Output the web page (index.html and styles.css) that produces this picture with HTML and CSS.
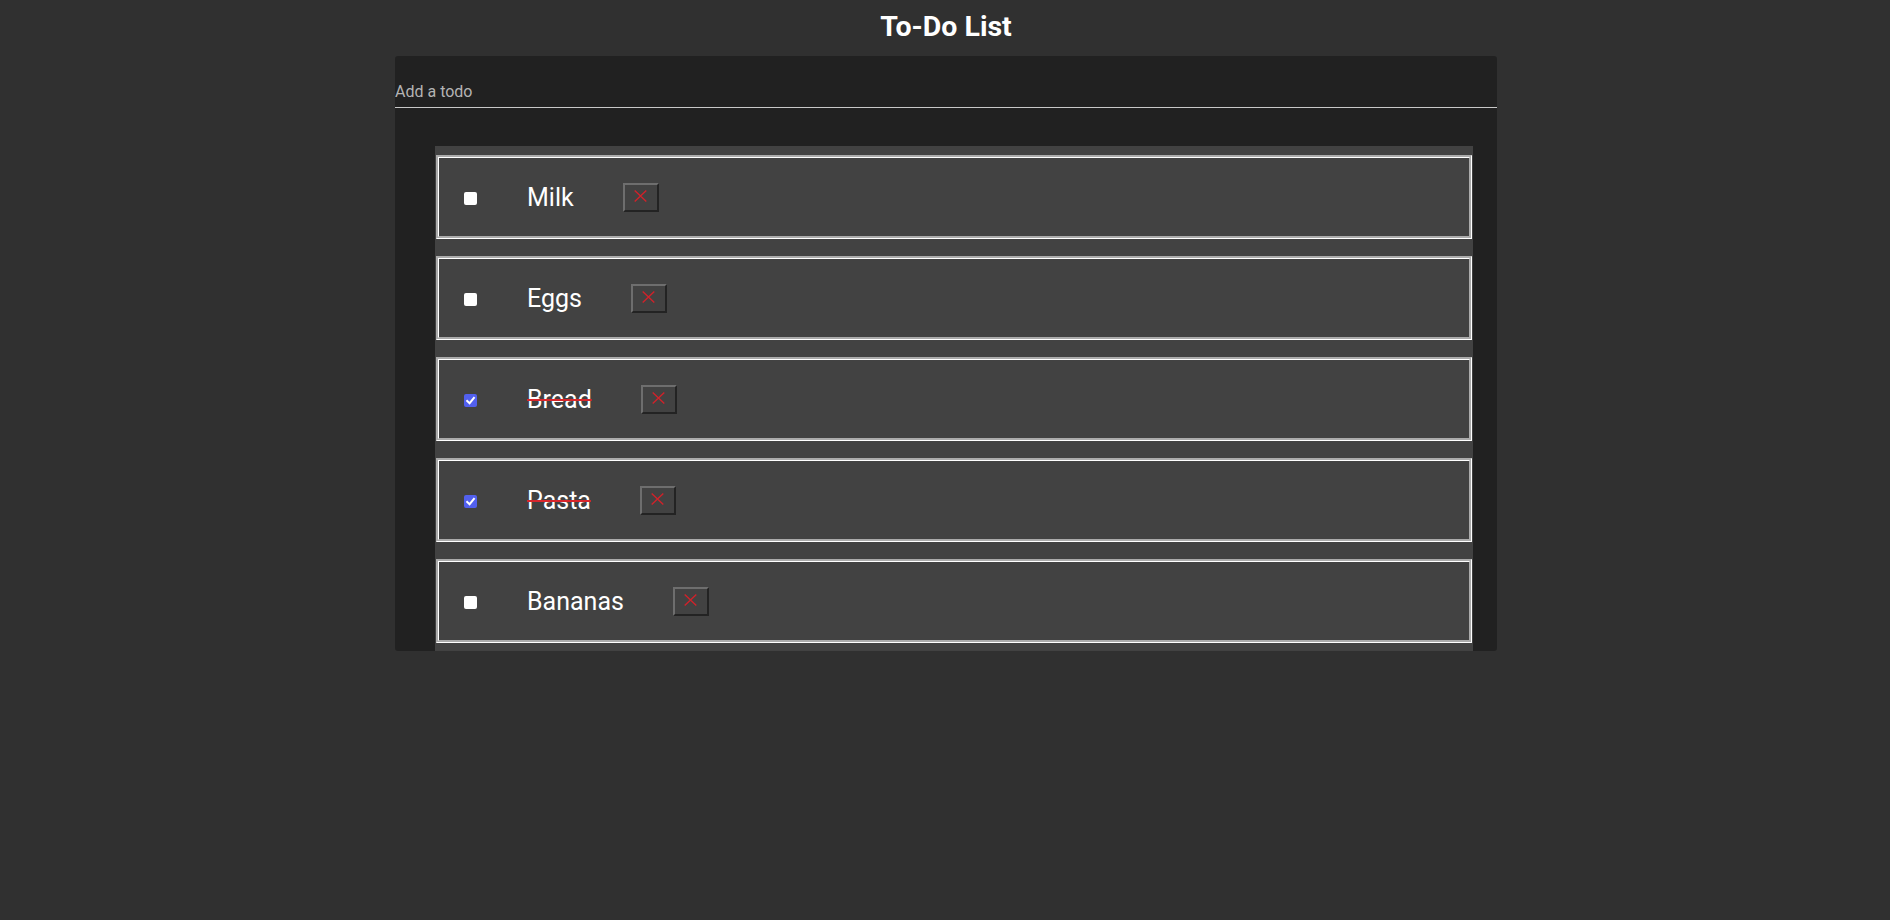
FILE: index.html
```html
<!DOCTYPE html>
<html lang="en">
<head>
<meta charset="utf-8">
<title>To-Do List</title>
<link rel="stylesheet" href="styles.css">
</head>
<body>
<h1 class="title">To-Do List</h1>
<div class="panel">
  <input class="todo-input" type="text" placeholder="Add a todo">
  <ul class="todo-list">
    <li class="todo-item">
      <span class="box"></span>
      <span class="todo-text">Milk</span>
      <button class="delete" type="button" aria-label="Delete"><svg class="x-icon" viewBox="0 0 13 12" width="13" height="12"><path d="M0.7 0.5 L12.3 11.5 M12.3 0.5 L0.7 11.5"/></svg></button>
    </li>
    <li class="todo-item">
      <span class="box"></span>
      <span class="todo-text">Eggs</span>
      <button class="delete" type="button" aria-label="Delete"><svg class="x-icon" viewBox="0 0 13 12" width="13" height="12"><path d="M0.7 0.5 L12.3 11.5 M12.3 0.5 L0.7 11.5"/></svg></button>
    </li>
    <li class="todo-item">
      <span class="box box-checked"><svg viewBox="0 0 13 13" width="13" height="13"><path d="M3.2 6.9 L5.6 9.2 L9.9 4"/></svg></span>
      <span class="todo-text done">Bread</span>
      <button class="delete" type="button" aria-label="Delete"><svg class="x-icon" viewBox="0 0 13 12" width="13" height="12"><path d="M0.7 0.5 L12.3 11.5 M12.3 0.5 L0.7 11.5"/></svg></button>
    </li>
    <li class="todo-item">
      <span class="box box-checked"><svg viewBox="0 0 13 13" width="13" height="13"><path d="M3.2 6.9 L5.6 9.2 L9.9 4"/></svg></span>
      <span class="todo-text done">Pasta</span>
      <button class="delete" type="button" aria-label="Delete"><svg class="x-icon" viewBox="0 0 13 12" width="13" height="12"><path d="M0.7 0.5 L12.3 11.5 M12.3 0.5 L0.7 11.5"/></svg></button>
    </li>
    <li class="todo-item">
      <span class="box"></span>
      <span class="todo-text">Bananas</span>
      <button class="delete" type="button" aria-label="Delete"><svg class="x-icon" viewBox="0 0 13 12" width="13" height="12"><path d="M0.7 0.5 L12.3 11.5 M12.3 0.5 L0.7 11.5"/></svg></button>
    </li>
  </ul>
</div>
</body>
</html>
```

FILE: styles.css
```css
html, body {
  margin: 0;
  padding: 0;
}

body {
  background: #303030;
  font-family: Roboto, "Liberation Sans", sans-serif;
  color: #ffffff;
  padding-left: 2px;
}

.title {
  margin: 11px 0 13px;
  font-size: 28.5px;
  line-height: 32px;
  font-weight: 700;
  text-align: center;
  color: #ffffff;
}

.panel {
  width: 1102px;
  margin: 0 auto;
  background: #212121;
  border-radius: 3px;
  padding-top: 26px;
  display: flex;
  flex-direction: column;
}

.todo-input {
  display: block;
  box-sizing: content-box;
  width: 100%;
  margin: 0;
  padding: 0 0 6px;
  height: 19px;
  line-height: 19px;
  border: none;
  border-bottom: 1px solid #c8c8c8;
  background: transparent;
  outline: none;
  font-family: Roboto, "Liberation Sans", sans-serif;
  font-size: 16px;
  color: #ffffff;
}

.todo-input::placeholder {
  color: #b4b4b4;
  opacity: 1;
}

.todo-list {
  list-style: none;
  margin: 38px 24px 0 40px;
  padding: 9px 1px 8px;
  background: #424242;
  display: flex;
  flex-direction: column;
  gap: 17px;
}

.todo-item {
  box-sizing: border-box;
  height: 84px;
  border: 3px groove #ffffff;
  background: #424242;
  padding-left: 25px;
  display: flex;
  align-items: center;
}

.box {
  box-sizing: border-box;
  width: 13px;
  height: 13px;
  margin-top: 3px;
  border-radius: 2px;
  background: #ffffff;
  flex: none;
  display: flex;
}

.box-checked {
  background: #5260ee;
}

.box-checked svg path {
  fill: none;
  stroke: #ffffff;
  stroke-width: 2;
  stroke-linecap: square;
}

.todo-text {
  margin: 0 49px 0 50px;
  font-size: 25px;
  line-height: normal;
  color: #ffffff;
}

.done {
  text-decoration: line-through;
  text-decoration-color: #d8262c;
  text-decoration-thickness: 2px;
}

.delete {
  box-sizing: border-box;
  width: 36px;
  height: 29px;
  padding: 0 0 2px;
  margin: 0;
  background: #424242;
  border-style: solid;
  border-width: 2px;
  border-color: #6e6e6e #232323 #232323 #6e6e6e;
  display: flex;
  align-items: center;
  justify-content: center;
  cursor: pointer;
}

.x-icon path {
  fill: none;
  stroke: #cf222a;
  stroke-width: 1.4;
}
```
